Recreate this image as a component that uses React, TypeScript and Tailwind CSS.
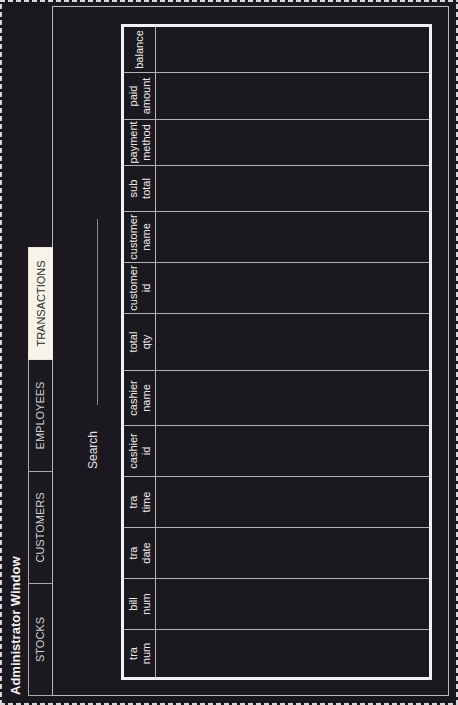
import React from 'react';

const tabs = ['STOCKS', 'CUSTOMERS', 'EMPLOYEES', 'TRANSACTIONS'];

// column label + width (px, includes the right rule)
const columns: { top: string; bottom: string; w: string }[] = [
  { top: 'tra', bottom: 'num', w: 'w-[48px]' },
  { top: 'bill', bottom: 'num', w: 'w-[51px]' },
  { top: 'tra', bottom: 'date', w: 'w-[51px]' },
  { top: 'tra', bottom: 'time', w: 'w-[51px]' },
  { top: 'cashier', bottom: 'id', w: 'w-[51px]' },
  { top: 'cashier', bottom: 'name', w: 'w-[55px]' },
  { top: 'total', bottom: 'qty', w: 'w-[57px]' },
  { top: 'customer', bottom: 'id', w: 'w-[51px]' },
  { top: 'customer', bottom: 'name', w: 'w-[51px]' },
  { top: 'sub', bottom: 'total', w: 'w-[46px]' },
  { top: 'payment', bottom: 'method', w: 'w-[46px]' },
  { top: 'paid', bottom: 'amount', w: 'w-[47px]' },
  { top: 'balance', bottom: '', w: 'w-[45px]' },
];

function TransactionsTable() {
  return (
    <div className="w-[656px] h-[311px] border-[3px] border-[#f2f2f2] flex">
      {columns.map((c, i) => (
        <div
          key={i}
          className={`${c.w} h-full flex flex-col ${i < columns.length - 1 ? 'border-r border-[#b4b4b4]' : ''}`}
        >
          <div className="h-[32px] border-b border-[#b4b4b4] flex flex-col items-center justify-center text-[11px] leading-[12.5px] text-[#ececec] whitespace-nowrap">
            <span>{c.top}</span>
            {c.bottom && <span>{c.bottom}</span>}
          </div>
          <div className="flex-1" />
        </div>
      ))}
    </div>
  );
}

export default function App() {
  return (
    <div className="relative w-[458px] h-[705px] overflow-hidden bg-[#1b1820] font-['Liberation_Sans',Arial,sans-serif]">
      {/* the whole window is laid on its side; dashed frame drawn with gradients */}
      <div className="absolute left-0 top-0 w-[705px] h-[458px] origin-top-left -rotate-90 translate-y-[705px] p-[2px] bg-no-repeat bg-[repeating-linear-gradient(90deg,#d6d6d6_0_5px,transparent_5px_8px),repeating-linear-gradient(90deg,#d6d6d6_0_5px,transparent_5px_8px),repeating-linear-gradient(180deg,#d6d6d6_0_5px,transparent_5px_8px),repeating-linear-gradient(180deg,#d6d6d6_0_5px,transparent_5px_8px)] bg-[length:100%_2px,100%_2px,2px_100%,2px_100%] bg-[position:left_top,left_bottom,left_top,right_top]">
        <div className="pl-[7px] pt-[6px]">
          <div className="pl-[1px] h-[16px] leading-[16px] text-[13px] font-bold text-[#f2f2f2]">
            Administrator Window
          </div>

          <div className="mt-[4px] w-[690px]">
            {/* tab headers */}
            <div className="flex h-[24px]">
              {tabs.map((t, i) => {
                const active = t === 'TRANSACTIONS';
                return (
                  <div
                    key={t}
                    className={`w-[112px] flex items-center justify-center text-[11px] border-t border-l ${
                      i === tabs.length - 1 ? 'w-[113px] border-r' : ''
                    } ${
                      active
                        ? 'relative z-10 h-[25px] bg-[#f6f3ea] border-[#e8e4da] text-[#2a2a2a]'
                        : 'h-[24px] border-[#a9a9a9] text-[#d2d2d2]'
                    }`}
                  >
                    {t}
                  </div>
                );
              })}
            </div>

            {/* tab content */}
            <div className="h-[397px] border border-[#b9b9b9] pl-[15px]">
              <div className="mt-[20px] h-[25px] flex items-end">
                <span className="ml-[211px] h-[14px] leading-[14px] mb-[-2px] text-[12px] text-[#e4e4e4]">
                  Search
                </span>
                <div className="ml-[26px] w-[186px] h-[25px] border-b border-[#8c8c8c]" />
              </div>
              <div className="mt-[23px]">
                <TransactionsTable />
              </div>
            </div>
          </div>
        </div>
      </div>
    </div>
  );
}
